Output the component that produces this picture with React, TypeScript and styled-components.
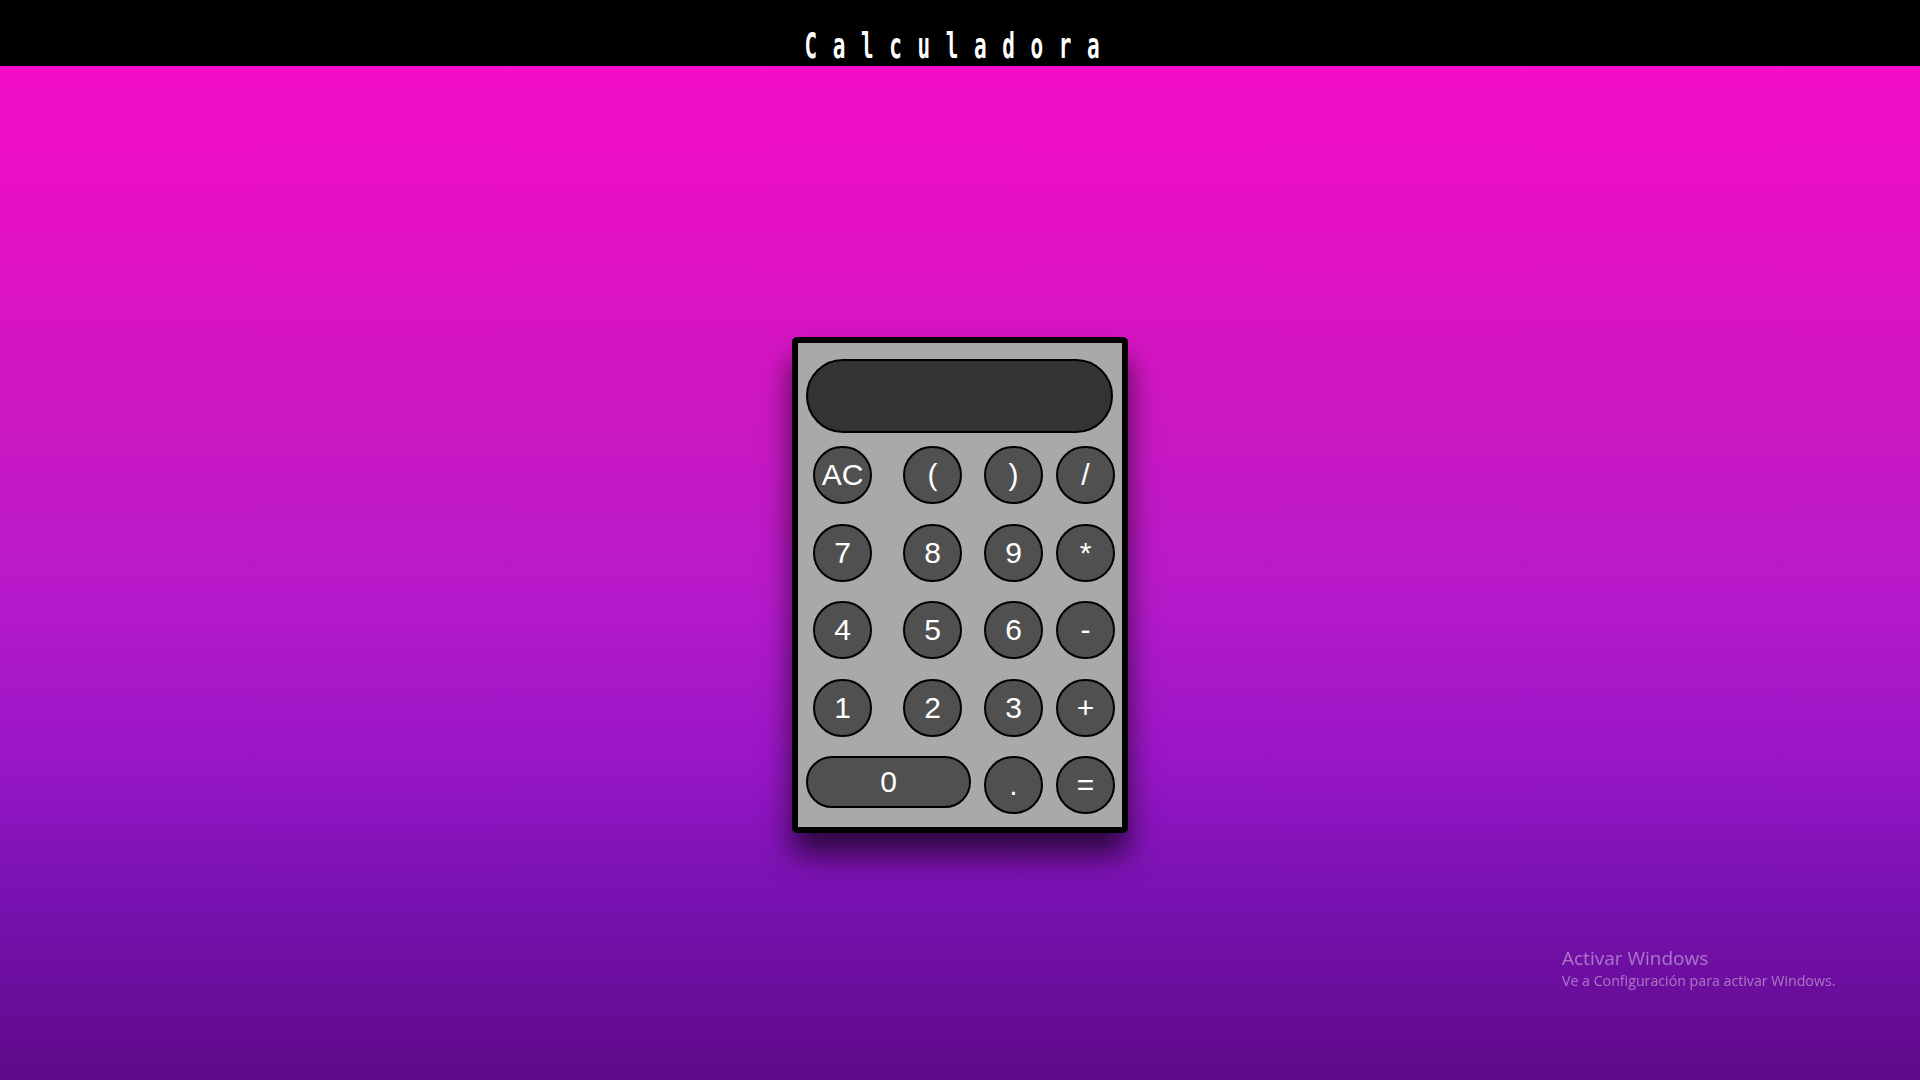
import React from "react";
import styled, { createGlobalStyle } from "styled-components";

const GlobalStyle = createGlobalStyle`
  html, body {
    margin: 0;
    padding: 0;
  }
  body {
    min-height: 100vh;
    font-family: "Liberation Sans", Arial, sans-serif;
    background: linear-gradient(
      180deg,
      #f90bcb 0%,
      #e510c4 20%,
      #c918c3 40%,
      #b71acb 55%,
      #9a16c6 70%,
      #7a12b4 82%,
      #5d0a88 100%
    );
    background-attachment: fixed;
  }
`;

const Page = styled.div`
  min-height: 100vh;
  display: flex;
  flex-direction: column;
`;

const Header = styled.header`
  height: 66px;
  background: #000;
  display: flex;
  justify-content: center;
  align-items: flex-start;
  overflow: hidden;
`;

const Title = styled.h1`
  margin: 26px 0 0 0;
  color: #fff;
  font-family: "DejaVu Sans Mono", "Liberation Mono", monospace;
  font-weight: 700;
  font-size: 35px;
  line-height: 40px;
  letter-spacing: 26px;
  transform: scaleX(0.6);
  transform-origin: center;
  white-space: nowrap;
`;

const Main = styled.main`
  flex: 1;
  display: flex;
  justify-content: center;
  align-items: flex-start;
  padding-top: 271px;
`;

const Calculator = styled.div`
  box-sizing: border-box;
  width: 336px;
  background: #a9a9a9;
  border: 6px solid #000;
  border-radius: 5px;
  box-shadow: 0 22px 30px rgba(0, 0, 0, 0.65);
  padding: 16px 9px 13px 8px;
  display: flex;
  flex-direction: column;
  gap: 13px;
`;

const Display = styled.div`
  width: 307px;
  height: 74px;
  box-sizing: border-box;
  background: #333;
  border: 2px solid #000;
  border-radius: 37px;
`;

const Keypad = styled.div`
  display: grid;
  grid-template-columns: 90px 81px 72px 58px;
  grid-auto-rows: 58px;
  row-gap: 19.6px;
  padding-left: 7px;
  align-items: start;
`;

const Key = styled.button<{ $wide?: boolean }>`
  box-sizing: border-box;
  width: ${(p) => (p.$wide ? "165px" : "59px")};
  height: ${(p) => (p.$wide ? "52px" : "58px")};
  margin-left: ${(p) => (p.$wide ? "-7px" : "0")};
  grid-column: ${(p) => (p.$wide ? "span 2" : "auto")};
  border-radius: 30px;
  border: 2px solid #000;
  background: #505050;
  color: #fff;
  font-family: "Liberation Sans", Arial, sans-serif;
  font-size: 30px;
  line-height: 1;
  padding: 0;
  display: flex;
  align-items: center;
  justify-content: center;
  cursor: pointer;
`;

const Watermark = styled.div`
  position: fixed;
  left: 1562px;
  top: 945px;
  color: rgba(255, 255, 255, 0.42);
  font-family: "Open Sans", "Noto Sans", sans-serif;
`;

const WmTitle = styled.div`
  font-size: 19px;
  line-height: 26px;
`;

const WmSub = styled.div`
  font-size: 14.2px;
  line-height: 20px;
`;

const keys = [
  "AC", "(", ")", "/",
  "7", "8", "9", "*",
  "4", "5", "6", "-",
  "1", "2", "3", "+",
];

export default function App() {
  return (
    <>
      <GlobalStyle />
      <Page>
        <Header>
          <Title>Calculadora</Title>
        </Header>
        <Main>
          <Calculator>
            <Display />
            <Keypad>
              {keys.map((k) => (
                <Key key={k}>{k}</Key>
              ))}
              <Key $wide>0</Key>
              <Key>.</Key>
              <Key>=</Key>
            </Keypad>
          </Calculator>
        </Main>
      </Page>
      <Watermark>
        <WmTitle>Activar Windows</WmTitle>
        <WmSub>Ve a Configuración para activar Windows.</WmSub>
      </Watermark>
    </>
  );
}
